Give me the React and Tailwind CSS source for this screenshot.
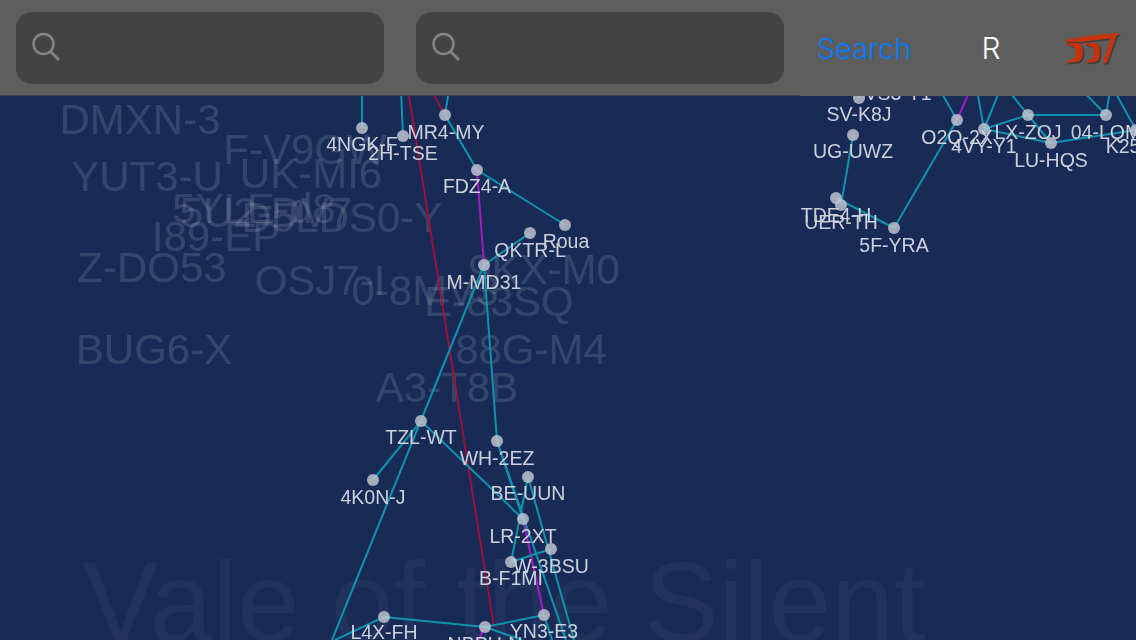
const TEAL = [
  [362,90,362,128],[401,90,403,136],[449,90,445,115],[445,115,477,170],[477,170,565,225],
  [484,265,530,233],[484,265,497,441],[484,265,332,640],[421,421,373,480],[421,421,523,519],
  [497,441,523,519],[497,441,566,640],[528,477,574,640],[528,477,511,562],[511,562,551,549],
  [384,617,485,627],[384,617,335,640],[485,627,544,615],[485,627,522,640],[544,615,552,640],
  [859,90,859,98],[853,135,841,205],[836,198,894,228],[894,228,957,120],[940,90,957,120],
  [977,90,984,129],[1000,90,984,129],[984,129,1028,115],[1008,90,1028,115],[1028,115,1106,115],
  [1028,115,1051,143],[984,129,1051,143],[1051,143,1136,130],[1082,90,1106,115],[1110,90,1106,115],[1114,90,1136,130],
];
const RED = [[408,90,494,627],[431,90,445,115]];
const PURPLE = [[477,170,484,265],[523,519,544,615],[485,627,478,640],[970,90,957,120]];
const NODES = [
  [362,128],[403,136],[445,115],[477,170],[565,225],[530,233],[484,265],[421,421],[497,441],[528,477],
  [373,480],[523,519],[551,549],[511,562],[384,617],[485,627],[544,615],[859,98],[853,135],[836,198],
  [841,205],[894,228],[957,120],[984,129],[1028,115],[1051,143],[1106,115],[1136,130],
];
const LABELS = [
  ["VS3-Y1",898,93],["4NGK-F",362,144],["2H-TSE",403,153],["MR4-MY",446,132],["FDZ4-A",477,186],["Roua",566,241],
  ["QKTR-L",530,250],["M-MD31",484,282],["TZL-WT",421,437],["WH-2EZ",497,458],["BE-UUN",528,493],
  ["4K0N-J",373,497],["LR-2XT",523,536],["W-3BSU",551,566],["B-F1MI",511,578],["L4X-FH",384,632],
  ["NBPU-N",485,644],["YN3-E3",544,631],["SV-K8J",859,114],["UG-UWZ",853,151],["TDE4-H",836,215],
  ["UER-TH",841,222],["5F-YRA",894,245],["O2Q-2X",957,137],["4VY-Y1",984,146],["LX-ZOJ",1028,132],
  ["LU-HQS",1051,160],["04-LQM",1106,132],["K25",1123,146],
];
const REGIONS = [
  ["DMXN-3",140,119],["F-V9GW",305,149],["YUT3-U",147,176],["UK-MI6",311,173],["5YLE-d8",254,208],
  ["5U2-DV7",266,212],["D5LDS0-Y",342,217],["I89-EP",216,236],["Z-DO53",152,267],["OSJ7-I",320,280],
  ["0-8MV3",425,290],["E-83SQ",499,301],["9KX-M0",544,269],["88G-M4",531,349],["BUG6-X",154,349],["A3-T8B",447,387],
];

function SearchField() {
  return (
    <div className="w-[368px] h-[72px] rounded-2xl bg-[#434343] flex items-center pl-4 shrink-0">
      <svg width="30" height="32" viewBox="0 0 30 32" fill="none" stroke="#858585" strokeWidth="2.4">
        <circle cx="11.500" cy="12" r="10" />
        <path d="M18.500 19.500 L27 28" strokeWidth="3" />
      </svg>
    </div>
  );
}

function LogoShapes() {
  return (
    <>
      <path d="M7 12 Q30 7 62 5 L56 10 L22 14 L9 14 Z" />
      <path d="M53 9 L58 9 L49 35 L45 35 Z" />
      <path d="M7 15 L20 15 Q25 16 25 24 Q25 33 19 34 L7 35 L14 31 Q18 30 18 24 Q18 19 13 18 Z" />
      <path d="M25 15 L38 15 Q42 16 42 24 Q42 33 37 34 L26 35 L33 31 Q36 30 36 24 Q36 19 31 18 Z" />
    </>
  );
}

function Logo() {
  return (
    <svg width="66" height="40" viewBox="0 0 66 40">
      <g fill="#3f3f3f" transform="translate(1.500 1.500)"><LogoShapes /></g>
      <g fill="#c5320c"><LogoShapes /></g>
    </svg>
  );
}

function Lines({ data, color, width }) {
  return data.map(([a, b, c, d], i) => (
    <line key={i} x1={a} y1={b} x2={c} y2={d} stroke={color} strokeWidth={width} />
  ));
}

export default function App() {
  return (
    <div className="w-[1136px] h-[640px] flex flex-col overflow-hidden bg-[#182b57] font-['Liberation_Sans',sans-serif]">
      <header className="h-24 shrink-0 flex bg-[#5e5e5e]">
        <div className="w-[800px] h-[96px] border-b border-[#3a3f4c] pl-4 pt-3 flex items-start gap-8 shrink-0">
          <SearchField />
          <SearchField />
        </div>
        <div className="flex-1 flex items-center">
          <span className="ml-[17px] text-[29px] leading-none text-[#007aff] font-['Inter',sans-serif] font-light">Search</span>
          <span className="ml-[70px] text-[30px] leading-none text-white font-['Inter',sans-serif] font-light">R</span>
          <span className="ml-[57px]"><Logo /></span>
        </div>
      </header>
      <main className="relative flex-1 overflow-hidden blur-[0.4px]">
        <div className="absolute left-[83px] top-[451px] text-[112.5px] leading-[111px] whitespace-nowrap text-white/[0.04]">Vale of the Silent</div>
        {REGIONS.map(([t, x, y]) => (
          <div key={t} className="absolute -translate-x-1/2 -translate-y-1/2 text-[42px] leading-none whitespace-nowrap text-white/[0.13]" style={{ left: x, top: y - 95 }}>{t}</div>
        ))}
        <svg className="absolute inset-0" width="1136" height="544" viewBox="0 96 1136 544">
          <Lines data={RED} color="#a5103a" width="1.8" />
          <Lines data={PURPLE} color="#a51cc4" width="2" />
          <Lines data={TEAL} color="#0f93ad" width="2" />
          {NODES.map(([x, y], i) => (
            <circle key={i} cx={x} cy={y} r="6" fill="#c3c7d3" fillOpacity="0.82" />
          ))}
        </svg>
        {LABELS.map(([t, x, y]) => (
          <div key={t} className="absolute -translate-x-1/2 -translate-y-1/2 text-[19.5px] leading-none whitespace-nowrap text-[#ccd0db]" style={{ left: x, top: y - 95 }}>{t}</div>
        ))}
      </main>
    </div>
  );
}
